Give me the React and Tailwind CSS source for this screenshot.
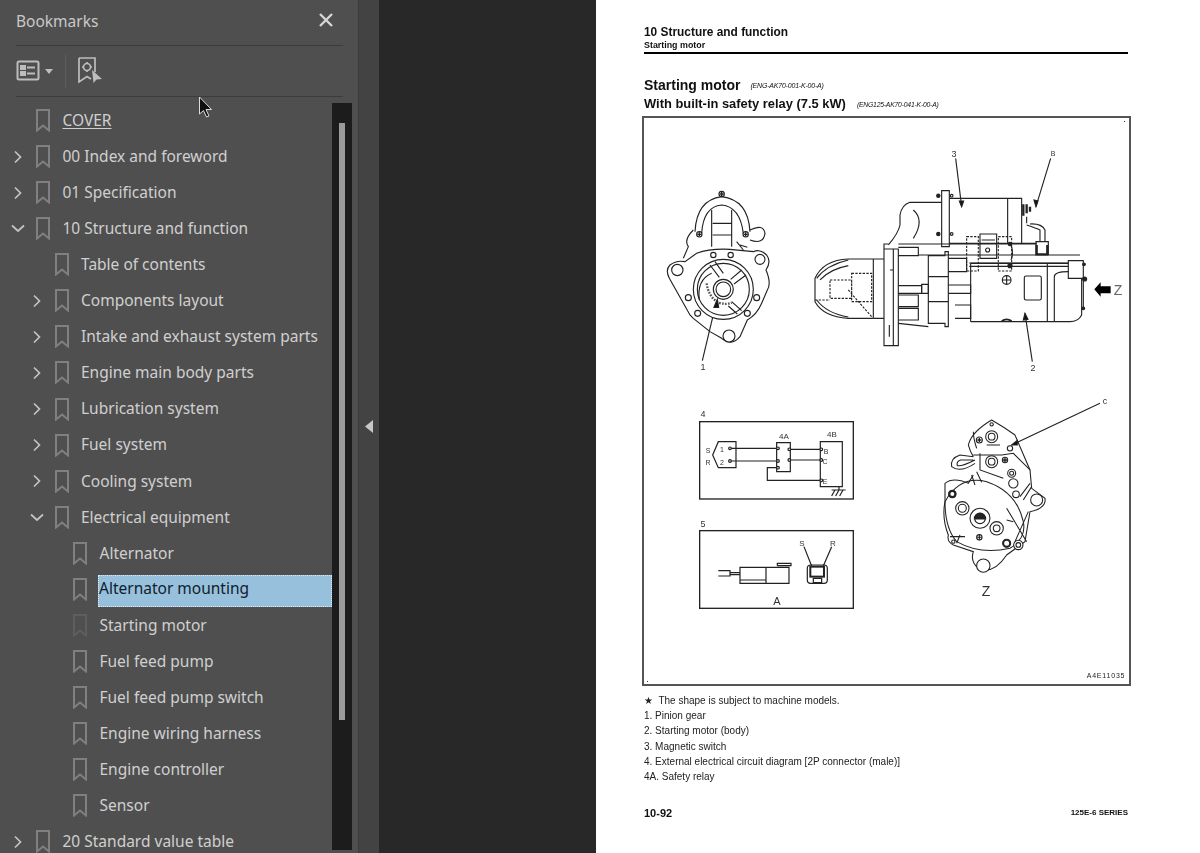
import React from 'react';

const tree = [
  { label: 'COVER', level: 0, underline: true },
  { label: '00 Index and foreword', level: 0, arrow: 'right' },
  { label: '01 Specification', level: 0, arrow: 'right' },
  { label: '10 Structure and function', level: 0, arrow: 'down' },
  { label: 'Table of contents', level: 1 },
  { label: 'Components layout', level: 1, arrow: 'right' },
  { label: 'Intake and exhaust system parts', level: 1, arrow: 'right' },
  { label: 'Engine main body parts', level: 1, arrow: 'right' },
  { label: 'Lubrication system', level: 1, arrow: 'right' },
  { label: 'Fuel system', level: 1, arrow: 'right' },
  { label: 'Cooling system', level: 1, arrow: 'right' },
  { label: 'Electrical equipment', level: 1, arrow: 'down' },
  { label: 'Alternator', level: 2 },
  { label: 'Alternator mounting', level: 2, selected: true },
  { label: 'Starting motor', level: 2, dim: true },
  { label: 'Fuel feed pump', level: 2 },
  { label: 'Fuel feed pump switch', level: 2 },
  { label: 'Engine wiring harness', level: 2 },
  { label: 'Engine controller', level: 2 },
  { label: 'Sensor', level: 2 },
  { label: '20 Standard value table', level: 0, arrow: 'right' },
];

const indent = ['pl-[10px]', 'pl-[28.5px]', 'pl-[47px]'];

const BookmarkIcon = ({ dim }) => (
  <svg width="14" height="23" viewBox="0 0 14 23" fill="none" stroke={dim ? '#5e5e5e' : '#808080'} strokeWidth="2" className="shrink-0">
    <path d="M1 1H13V21.5L7 16.5L1 21.5Z" />
  </svg>
);

const Arrow = ({ dir }) => (
  <span className="w-[16px] mr-[10px] h-full flex items-center justify-center shrink-0">
    {dir === 'right' && (
      <svg width="10" height="14" viewBox="0 0 10 14" fill="none" stroke="#c4c4c4" strokeWidth="1.7">
        <path d="M2 1.5L7.5 7L2 12.5" />
      </svg>
    )}
    {dir === 'down' && (
      <svg width="14" height="9" viewBox="0 0 14 9" fill="none" stroke="#c4c4c4" strokeWidth="1.7">
        <path d="M1 1.5L7 7L13 1.5" />
      </svg>
    )}
  </span>
);

const Row = ({ item }) => (
  <div className={`h-[36.07px] flex items-center shrink-0 ${indent[item.level]}`}>
    <Arrow dir={item.arrow} />
    <BookmarkIcon dim={item.dim} />
    {item.selected ? (
      <span className="ml-[11px] mt-[3px] pb-[5px] flex-1 h-[32px] flex items-center bg-[#97c0dc] text-[#10202c] border border-dotted border-[#dfe9f0] whitespace-nowrap">
        {item.label}
      </span>
    ) : (
      <span className={`ml-[12.5px] whitespace-nowrap ${item.underline ? 'underline underline-offset-2' : ''}`}>{item.label}</span>
    )}
  </div>
);

const lines = (list) => list.map((d, i) => <path key={i} d={d} />);
const rings = (list) =>
  list.map(([x, y, r, dark], i) => <circle key={i} cx={x} cy={y} r={r} fill={dark ? '#222' : 'white'} />);

// drawing is traced in 3x crop coordinates, so each part gets its own group
const FrontView = () => (
  <g transform="translate(660 190) scale(0.3333)" fill="none" stroke="#222" strokeWidth="3.4">
    {lines([
      'M30 225Q50 210 75 215L110 190Q150 175 210 178L280 185Q300 175 320 195Q335 215 318 240Q335 280 322 300L305 340Q290 375 262 390L240 440Q215 470 185 445L150 425L100 385L90 375L28 265Q15 240 30 225Z',
      'M105 125Q110 30 185 20Q265 30 270 125',
      'M125 130Q130 50 185 45Q240 50 250 130',
      'M155 60V170M215 60V170M158 100H215M158 135H215',
      'M270 120Q310 100 315 130Q310 165 270 150',
      'M100 120Q70 150 85 170L70 205',
      'M240 165L262 172M230 155L250 180',
      'M127 512L168 340',
    ])}
    {rings([
      [52, 240, 17], [300, 208, 15], [207, 438, 18],
      [190, 298, 90], [190, 298, 78],
    ])}
    {lines([
      'M150 225L178 262M165 215L190 250',
      'M245 240L212 268M258 255L222 282',
      'M215 335L245 362M205 348L232 372',
      'M118 330Q110 270 155 250',
    ])}
    {rings([
      [190, 298, 30], [190, 298, 22],
      [160, 195, 8], [212, 195, 8], [85, 323, 9], [290, 323, 9], [113, 370, 9], [262, 370, 9],
      [118, 133, 8], [257, 133, 8], [185, 12, 8],
    ])}
    <path d="M112 133H124M118 127V139M251 133H263M257 127V139M179 12H191M185 6V18" strokeWidth="4" />
    <path d="M140 280Q145 320 175 338Q200 345 215 338" strokeWidth="7" strokeDasharray="5 4" stroke="#555" />
    <path d="M162 352L172 328L176 352Z" fill="#111" />
  </g>
);

const SideView = () => (
  <g transform="translate(810 145) scale(0.3333)" fill="none" stroke="#222" strokeWidth="3.4">
    {lines([
      'M437 40L455 185M722 40L678 185',
      'M418 160H635V295H418M593 160V295',
      'M395 172H300Q275 180 270 210V240Q265 265 235 300',
      'M310 195Q345 225 310 280',
      'M395 137H418V305H395Z',
      'M222 312H250V602H222ZM250 312H265V602H250M222 312V297H235M238 540V575M240 375H250',
      'M190 342H115Q40 345 15 400V470Q40 515 115 520H190',
      'M20 400Q50 360 115 345M30 405Q60 372 115 362M20 465Q50 505 115 516',
      'M190 342H222M190 342V520M190 520L222 520M265 535L355 545',
      'M482 355H775M482 530H780Q805 530 815 510V400M482 355V530M712 355V530M733 530V395Q733 380 775 380',
      'M775 347H820V400H775ZM820 400V490',
      'M355 332H405V320H415V545H405V535H355ZM355 395H415M355 470H415',
      'M415 340H470V380H415M415 420H482V445H415M435 480H482V520H435',
      'M265 307H325V332H265M265 422H335V445H265M265 450H325V485H265M265 490H325V525H265',
      'M335 418H355V445H335Z',
      'M265 297H680M325 330H810M478 354H775M478 364H775',
      'M510 267H560V340H510ZM515 285H555',
      'M678 330V290H715V330M690 290V255Q680 250 650 240M705 290V255Q695 235 660 237',
      'M650 215V235M635 295H680',
      'M603 300Q612 325 603 345',
      'M667 650L645 505',
    ])}
    <path d="M470 275H505V378H470ZM565 275H605V378H565Z" strokeDasharray="7 4" />
    <path d="M125 385H185V470H125ZM60 405H125V460H60ZM115 435L185 515M15 465H60" strokeDasharray="7 4" />
    <rect x="643" y="393" width="51" height="72" rx="5" />
    {rings([[533, 315, 6], [590, 405, 13], [425, 152, 4], [425, 267, 4]])}
    <path d="M577 405H603M590 392V418" />
    <path d="M640 178V212M650 178V205M660 185V200M680 300V328H712V300" strokeWidth="7" />
    {rings([[385, 152, 5, true], [385, 267, 5, true], [600, 297, 5, true], [600, 362, 6, true], [822, 358, 4, true], [824, 402, 6, true], [820, 490, 4, true]])}
    <path d="M678 185L672 165L684 168Z M455 185L448 168L461 168Z M645 505L640 525L654 523Z" fill="#111" />
    <path d="M575 528Q590 518 605 528" strokeWidth="5" />
    <path d="M853 433L872 412V424H902V445H872V455Z" fill="#000" stroke="none" />
  </g>
);

const RearView = () => (
  <g transform="translate(930 395) scale(0.3333)" fill="none" stroke="#222" strokeWidth="3.2">
    {lines([
      'M510 25L245 150',
      'M115 150Q125 110 185 75Q220 95 255 120L300 225L305 280L345 310Q350 340 300 350L285 440L230 480Q190 540 145 520Q120 500 130 470L70 450Q50 440 55 420Q35 370 45 320V265Q70 245 115 265L130 240',
      'M115 150Q120 170 130 185M130 110Q130 130 140 160',
      'M130 185L90 180Q60 190 65 215Q90 235 135 205M130 195L92 195Q78 200 82 212Q95 215 135 195',
      'M130 180H215L250 175L300 225M150 175V225L220 250M170 150L210 150',
      'M45 320Q90 240 170 260Q260 290 280 380Q290 430 240 460Q150 480 80 440Q45 400 45 320',
      'M125 240L135 270M140 230L155 262',
      'M60 425L105 425M90 420L80 445',
      'M230 340L290 440M295 350L255 440M230 375L250 380',
      'M270 305L300 265M280 315L305 275',
    ])}
    {rings([
      [185, 125, 18], [185, 125, 10], [148, 135, 9], [240, 160, 8], [185, 200, 18], [185, 200, 10],
      [225, 195, 8], [245, 235, 12], [245, 235, 6], [250, 265, 14], [258, 298, 10], [320, 315, 18],
      [185, 88, 5], [67, 297, 11], [97, 340, 20], [97, 340, 12], [150, 370, 30], [150, 370, 16],
      [200, 400, 20], [200, 400, 10], [148, 427, 8], [230, 445, 12], [265, 450, 14], [265, 450, 7],
      [70, 440, 5], [160, 512, 20],
    ])}
    <circle cx="67" cy="297" r="9" strokeWidth="6" />
    <circle cx="230" cy="445" r="10" strokeWidth="5" />
    <path d="M142 135H154M148 129V141M219 195H231M225 189V201" strokeWidth="4" />
    <path d="M133 372A17 17 0 0 1 167 372Z" fill="#222" />
    <path d="M148 418V436M141 427H155" />
    <path d="M245 150L262 136L262 150Z" fill="#111" />
  </g>
);

const Circuit = () => (
  <g transform="translate(640 400) scale(0.3333)" fill="none" stroke="#222" strokeWidth="3.6">
    <rect x="179" y="65" width="461" height="232" strokeWidth="4" />
    <rect x="179" y="392" width="461" height="233" strokeWidth="4" />
    {lines([
      'M218 165L235 125H288V203H235Z',
      'M410 128H451V215H410ZM541 125H607V260H541Z',
      'M270 145H410M270 183H410M450 148H541M450 180H541',
      'M410 203H382V241H541',
      'M597 260V270M575 270H617M585 270L575 288M597 270L587 288M609 270L599 288',
      'M235 512H270V528H235M270 518H300M270 524H300',
      'M300 502H378V550H300ZM300 540H378M378 502H447V550H378M412 497V490H453V497H412',
      'M502 505Q502 495 512 495H552Q562 495 562 505V540Q562 550 552 550H512Q502 550 502 540Z',
      'M520 535H545V548H520Z',
      'M492 440L515 498M575 440L550 498',
    ])}
    <rect x="511" y="500" width="41" height="30" strokeWidth="6" />
    {rings([
      [270, 145, 4], [270, 183, 4], [414, 145, 4], [414, 183, 4], [414, 203, 4], [448, 148, 4], [448, 180, 4],
      [544, 148, 4], [544, 180, 4], [544, 241, 4],
    ])}
  </g>
);

const labels = [
  [703, 367, '1', 9], [1033, 368, '2', 9], [954, 154, '3', 9], [1053, 154, 'B', 7], [1105, 401, 'c', 9],
  [703, 414, '4', 9], [703, 524, '5', 9], [784, 436, '4A', 8], [832, 434, '4B', 8],
  [708, 451, 'S', 7], [708, 463, 'R', 7], [722, 450, '1', 7], [722, 463, '2', 7],
  [826, 452, 'B', 7], [825, 462, 'C', 7], [825, 482, 'E', 7],
  [802, 543, 'S', 8], [833, 543, 'R', 8], [777, 601, 'A', 11], [986, 591, 'Z', 14],
];

const MotorDrawing = () => (
  <svg width="485" height="566" viewBox="644 118 485 566" className="block">
    <FrontView />
    <SideView />
    <RearView />
    <Circuit />
    {labels.map(([x, y, t, s], i) => (
      <text key={i} x={x} y={y + s * 0.35} fontSize={s} textAnchor="middle" fill="#333" fontFamily="Liberation Sans, sans-serif">
        {t}
      </text>
    ))}
    <text x="1118" y="295" fontSize="14" textAnchor="middle" fill="#666" fontFamily="Liberation Sans, sans-serif">Z</text>
    <text x="1106" y="678" fontSize="7" letterSpacing="0.8" textAnchor="middle" fill="#222" fontFamily="Liberation Sans, sans-serif">A4E11035</text>
    <rect x="1124" y="121" width="1" height="1" fill="#333" />
    <rect x="647" y="681" width="1" height="1" fill="#333" />
  </svg>
);

const notes = [
  '★\u00a0 The shape is subject to machine models.',
  '1. Pinion gear',
  '2. Starting motor (body)',
  '3. Magnetic switch',
  '4. External electrical circuit diagram [2P connector (male)]',
  '4A. Safety relay',
];

export default function App() {
  return (
    <div className="relative h-[853px] w-[1200px] flex overflow-hidden font-['Noto_Sans',sans-serif]">
      {/* bookmarks panel */}
      <aside className="w-[359px] h-full bg-[#4f4f4f] border-r border-[#3c3c3c] flex flex-col shrink-0 text-[#cfcfcf] text-[15.5px]">
        <div className="h-[46px] mx-[16px] mr-[15px] flex items-center justify-between border-b border-[#3c3c3c] shrink-0">
          <span className="text-[#c9c9c9] -mt-[1px]">Bookmarks</span>
          <svg width="16" height="16" viewBox="0 0 16 16" stroke="#d6d6d6" strokeWidth="2.4" className="mr-[9px] -mt-[5px]">
            <path d="M2 2L14 14M14 2L2 14" />
          </svg>
        </div>
        <div className="h-[51px] mx-[16px] mr-[15px] flex items-center border-b border-[#3c3c3c] shrink-0">
          <svg width="24" height="21" viewBox="0 0 24 21" fill="none" stroke="#bdbdbd" strokeWidth="2" className="-mt-[2px]">
            <rect x="1.5" y="1.5" width="21" height="18" rx="1.5" />
            <rect x="5" y="6" width="4" height="3" fill="#bdbdbd" />
            <rect x="5" y="12" width="4" height="3" fill="#bdbdbd" />
            <path d="M11 7.5H19M11 13.5H19" />
          </svg>
          <svg width="8" height="5" viewBox="0 0 8 5" className="ml-[5px]"><path d="M0 0H8L4 5Z" fill="#bdbdbd" /></svg>
          <span className="w-px h-[33px] bg-[#5e5e5e] ml-[12px]" />
          <svg width="24" height="27" viewBox="0 0 24 27" fill="none" stroke="#bdbdbd" strokeWidth="1.7" className="ml-[12px] -mt-[2px]">
            <path d="M1 1H17V15M1 1V25L9 19.5L13 22" />
            <circle cx="9" cy="10" r="3.5" />
            <path d="M9 5V6.5M9 13.5V15M4 10H5.5M12.5 10H14" />
            <path d="M14 13L24 22L18.5 22.5L15.5 26Z" fill="#bdbdbd" stroke="none" />
          </svg>
        </div>
        <div className="flex-1 flex pt-[5.5px] pb-[3px] min-h-0">
          <div className="w-[332px] flex flex-col shrink-0">
            {tree.map((item) => (
              <Row key={item.label} item={item} />
            ))}
          </div>
          <div className="w-[20px] bg-[#1c1c1c] pt-[20px] flex justify-center shrink-0">
            <div className="w-[6px] h-[597px] bg-[#9a9a9a]" />
          </div>
        </div>
      </aside>

      {/* collapse handle */}
      <div className="w-[20px] h-full bg-[#434343] flex items-center justify-center shrink-0">
        <svg width="8" height="13" viewBox="0 0 8 13"><path d="M8 0V13L0 6.5Z" fill="#c8c8c8" /></svg>
      </div>

      <div className="w-[217px] h-full bg-[#282828] shrink-0" />

      {/* pdf page */}
      <main className="flex-1 h-full bg-white pl-[48px] pr-[72px] pt-[25px] text-[#111] font-['Liberation_Sans',sans-serif] blur-[0.45px]">
        <div className="font-bold text-[11.9px] leading-[14px]">10 Structure and function</div>
        <div className="font-bold text-[8.9px] leading-[10px] mt-[1px]">Starting motor</div>
        <div className="h-[2px] bg-black mt-[2px]" />
        <div className="mt-[22px] h-[18px] flex items-center">
          <span className="font-bold text-[14px]">Starting motor</span>
          <span className="italic text-[7px] ml-[10px] mt-[3px] tracking-[-0.2px]">(ENG-AK70-001-K-00-A)</span>
        </div>
        <div className="mt-[1px] h-[18px] flex items-center">
          <span className="font-bold text-[12.9px]">With built-in safety relay (7.5 kW)</span>
          <span className="italic text-[6.8px] ml-[11px] mt-[3px] tracking-[-0.2px]">(ENG125-AK70-041-K-00-A)</span>
        </div>
        <div className="mt-[3px] -ml-[2px] -mr-[3px] h-[570px] border-2 border-[#555] bg-white">
          <MotorDrawing />
        </div>
        <div className="mt-[7px] text-[10px] leading-[15.2px] text-[#222]">
          {notes.map((n) => (
            <div key={n}>{n}</div>
          ))}
        </div>
        <div className="mt-[22px] flex items-center justify-between h-[14px]">
          <span className="font-bold text-[11px]">10-92</span>
          <span className="font-bold text-[8px]">125E-6 SERIES</span>
        </div>
      </main>

      {/* mouse pointer */}
      <svg width="16" height="23" viewBox="0 0 16 23" className="absolute left-[198px] top-[96px]">
        <path d="M1.5 1V18L5.5 14.5L8.5 21L11 20L8 13.5H13.5Z" fill="#111" stroke="#ddd" strokeWidth="1" />
      </svg>
    </div>
  );
}
